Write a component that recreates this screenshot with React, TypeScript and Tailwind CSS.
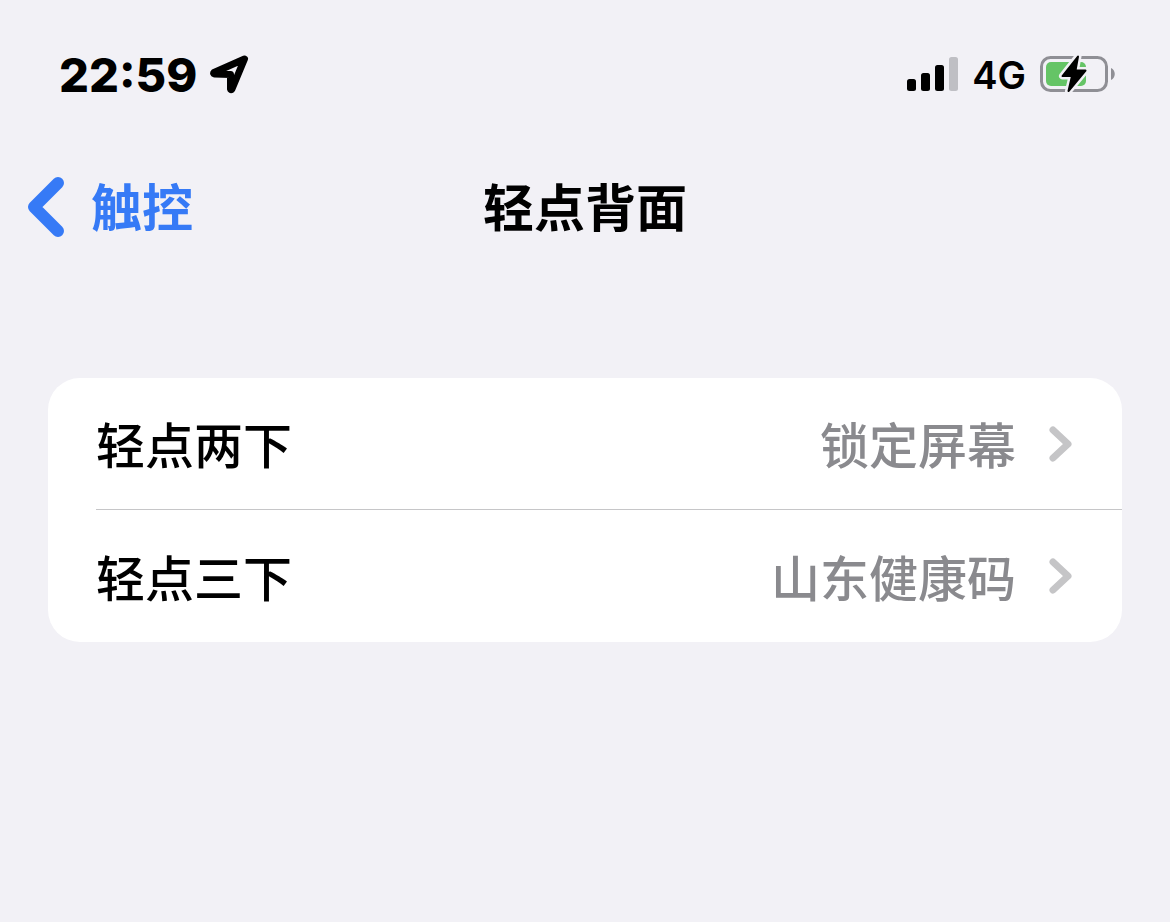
import React from 'react';

interface SettingRow {
  label: string;
  value: string;
}

const rows: SettingRow[] = [
  { label: '轻点两下', value: '锁定屏幕' },
  { label: '轻点三下', value: '山东健康码' },
];

function LocationIcon() {
  return (
    <svg width="40" height="40" viewBox="0 0 40 40" fill="none" aria-hidden="true">
      <path
        d="M35.500 5L5 18.500Q4 19.500 5.500 20L21.500 20.500V35Q22 36.500 23 35Z"
        stroke="#000"
        strokeWidth="7"
        strokeLinejoin="round"
      />
    </svg>
  );
}

function SignalIcon() {
  return (
    <svg width="52" height="36" viewBox="0 0 52 36" aria-hidden="true">
      <rect x="0" y="23" width="9" height="12" rx="2.500" />
      <rect x="14" y="17" width="9" height="18" rx="2.500" />
      <rect x="28" y="9" width="9" height="26" rx="2.500" />
      <rect x="42" y="1" width="9" height="34" rx="2.500" fill="#bfbfc4" />
    </svg>
  );
}

function BatteryIcon() {
  const bolt = 'M38 2.500L22.500 22H32L28.500 37L45.500 16.500H35.500Z';

  return (
    <svg width="76" height="40" viewBox="0 0 76 40" fill="none" aria-hidden="true">
      <rect x="1.500" y="3.500" width="65" height="33" rx="9" stroke="#8f8f95" strokeWidth="3" />
      <path d="M71 14C76 16 76 24 71 26Z" fill="#8f8f95" />
      <rect x="6" y="8" width="40" height="24" rx="5" fill="#65c466" />
      <path d={bolt} fill="#f2f1f6" stroke="#f2f1f6" strokeWidth="7" strokeLinejoin="round" />
      <path d={bolt} fill="#000" stroke="#000" strokeWidth="2" strokeLinejoin="round" />
    </svg>
  );
}

function StatusBar() {
  return (
    <div className="flex h-[148px] items-center justify-between pl-[59px] pr-[54px]">
      <div className="flex items-center gap-3">
        <time className="font-['Inter',sans-serif] text-[47px] font-extrabold leading-none">22:59</time>
        <LocationIcon />
      </div>
      <div className="flex items-center">
        <SignalIcon />
        <span className="ml-[13px] mr-[14px] pt-[2px] font-['Inter',sans-serif] text-[38px] font-semibold leading-none">4G</span>
        <BatteryIcon />
      </div>
    </div>
  );
}

export default function App() {
  return (
    <main className="min-h-screen bg-[#f2f1f6] font-['Noto_Sans_CJK_SC',sans-serif] text-black">
      <StatusBar />

      <header className="grid h-[118px] grid-cols-[1fr_auto_1fr] items-center px-[27px]">
        <a href="#touch" className="flex items-center gap-[25px] text-[51px] font-bold leading-none text-[#367af6]">
          <svg width="39" height="60" viewBox="0 0 39 60" fill="none" aria-hidden="true">
            <path d="M31 6L7 30L31 54" stroke="currentColor" strokeWidth="12" strokeLinecap="round" strokeLinejoin="round" />
          </svg>
          <span className="pb-1">触控</span>
        </a>
        <h1 className="pb-1 text-[51px] font-bold leading-none">轻点背面</h1>
      </header>

      <ul className="mx-12 mt-28 overflow-hidden rounded-[32px] bg-white">
        {rows.map((row, index) => (
          <li key={row.label} className="pl-12">
            <button
              type="button"
              className={`flex h-[132px] w-full items-center text-left text-[49px] font-medium leading-none ${
                index < rows.length - 1 ? 'border-b border-[#c6c6c8]' : ''
              }`}
            >
              <span className="pb-[2px]">{row.label}</span>
              <span className="ml-auto pb-[2px] text-[#8a8a8e]">{row.value}</span>
              <svg className="ml-8 mr-12" width="26" height="38" viewBox="0 0 26 38" fill="none" aria-hidden="true">
                <path d="M5 5L20 19L5 33" stroke="#c5c5c7" strokeWidth="7" strokeLinecap="round" strokeLinejoin="round" />
              </svg>
            </button>
          </li>
        ))}
      </ul>
    </main>
  );
}
